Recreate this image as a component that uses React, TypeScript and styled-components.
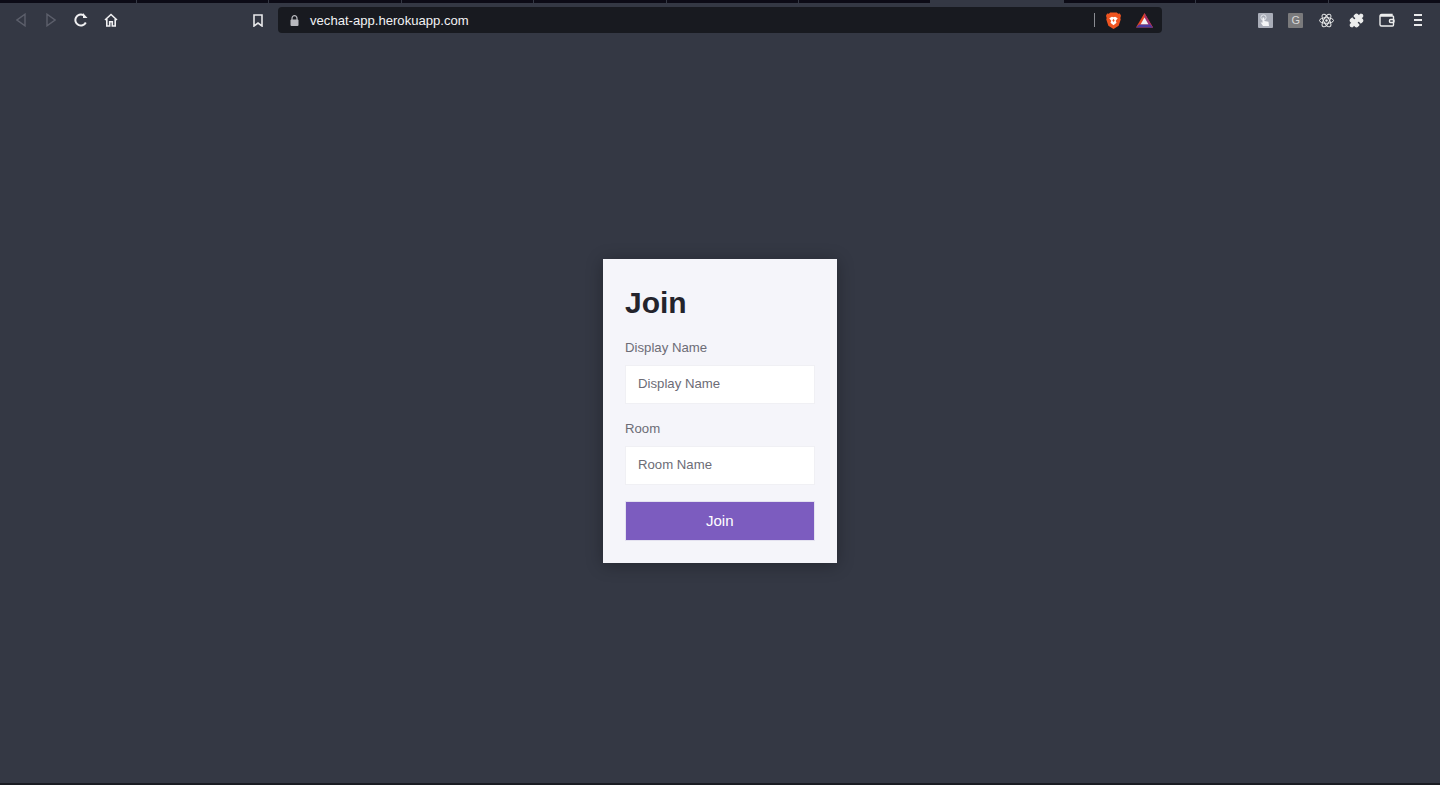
import styled, {createGlobalStyle} from 'styled-components'
import {Puzzle} from 'lucide-react'

const Global = createGlobalStyle`
  html, body, #root {
    margin: 0;
    height: 100%;
  }
  body {
    background: #343844;
    font-family: "Liberation Sans", Arial, sans-serif;
  }
`

const Page = styled.div`
  height: 785px;
  display: flex;
  flex-direction: column;
  overflow: hidden;
  background: #343844;
  border-bottom: 2px solid #1a1c22;
  box-sizing: border-box;
`

// ── Browser chrome ──

const TabStrip = styled.div`
  height: 3px;
  display: grid;
  grid-template-columns: 137px repeat(10, 132.4px);
  flex: none;
`

const Tab = styled.div<{$active?: boolean}>`
  background: ${(p) => (p.$active ? '#343844' : '#0c0b16')};
  border-right: 1px solid #343844;
`

const Toolbar = styled.div`
  height: 34px;
  margin-bottom: 2px;
  flex: none;
  display: flex;
  align-items: center;
  color: #fff;
`

const NavButton = styled.div`
  width: 30px;
  height: 24px;
  display: flex;
  align-items: center;
  justify-content: center;
  color: #f0f0f2;
  flex: none;
`

const NavGroup = styled.div`
  display: flex;
  margin-left: 6px;
`

const BookmarkSlot = styled.div`
  margin-left: 117px;
  width: 30px;
  display: flex;
  justify-content: center;
  color: #e8e8ea;
`

const AddressBar = styled.div`
  margin-left: 5px;
  width: 884px;
  height: 26px;
  box-sizing: border-box;
  background: #181a20;
  border-radius: 4px;
  display: flex;
  align-items: center;
  padding: 0 9px 0 12px;
  flex: none;
`

const Url = styled.span`
  margin-left: 11px;
  font-size: 13.1px;
  color: #f2f2f4;
  flex: 1;
`

const Divider = styled.div`
  width: 1px;
  height: 14px;
  background: #8a8c92;
  margin-right: 11px;
`

const AddressIcon = styled.svg`
  display: block;
  margin-right: 15px;
  &:last-child {
    margin-right: 0;
  }
`

const Extensions = styled.div`
  display: flex;
  align-items: center;
  margin-left: 88px;
`

const ExtSlot = styled.div`
  width: 30.5px;
  height: 24px;
  display: flex;
  align-items: center;
  justify-content: center;
  color: #eceded;
`

const ExtTile = styled.div<{$bg: string}>`
  width: 15px;
  height: 15px;
  background: ${(p) => p.$bg};
  color: #d8d8d8;
  font-size: 11px;
  display: flex;
  align-items: center;
  justify-content: center;
  border-radius: 1px;
`

const Burger = styled.div`
  display: flex;
  flex-direction: column;
  gap: 3.5px;
  width: 8px;
  span {
    display: block;
    height: 1.5px;
    background: #e8e8ea;
  }
`

// ── Join form ──

const Main = styled.main`
  flex: 1;
  display: flex;
  align-items: center;
  justify-content: center;
`

const Card = styled.form`
  width: 234px;
  height: 304px;
  box-sizing: border-box;
  padding: 22px 22.5px 22px 22px;
  background: #f5f5fa;
  box-shadow: 0 2px 16px rgba(0, 0, 0, 0.3);
  display: flex;
  flex-direction: column;
`

const Title = styled.h1`
  margin: 0 0 15px;
  font-size: 30px;
  line-height: 43px;
  font-weight: 700;
  color: #24242c;
`

const Label = styled.label`
  display: block;
  font-size: 13.2px;
  line-height: 17px;
  color: #6c6c76;
  margin-bottom: 8.75px;
  flex: none;
`

const Field = styled.input`
  display: block;
  width: 100%;
  height: 39.5px;
  flex: none;
  box-sizing: border-box;
  padding: 0 12px 2px;
  border: 1px solid #f0f0f4;
  background: #fff;
  font: inherit;
  font-size: 13.2px;
  color: #6c6c76;
  margin-bottom: 15.75px;
  border-radius: 0;
  outline: none;
  &::placeholder {
    color: #6c6c76;
    opacity: 1;
  }
`

const Submit = styled.button`
  width: 100%;
  height: 39.5px;
  flex: none;
  border: 1px solid #e4e2f0;
  background: #7c5cbf;
  color: #fff;
  font: inherit;
  font-size: 15px;
  padding: 0 0 1px;
  box-sizing: border-box;
`

const tabs = Array.from({length: 11}, (_, i) => i)

export default function App() {
  return (
    <Page>
      <Global />
      <TabStrip>
        {tabs.map((i) => (
          <Tab key={i} $active={i === 7} />
        ))}
      </TabStrip>
      <Toolbar>
        <NavGroup>
          <NavButton>
            <svg width="10" height="14" viewBox="0 0 10 14" fill="none" stroke="#5c5f6b" strokeWidth="1.4">
              <path d="M9 1.200v11.600L1 7z" />
            </svg>
          </NavButton>
          <NavButton>
            <svg width="10" height="14" viewBox="0 0 10 14" fill="none" stroke="#5c5f6b" strokeWidth="1.4">
              <path d="M1 1.200v11.600L9 7z" />
            </svg>
          </NavButton>
          <NavButton>
            <svg width="14" height="14" viewBox="0 0 14 14" fill="none" stroke="currentColor" strokeWidth="2">
              <path d="M11.800 9.500A5.500 5.500 0 1 1 9.500 2.200" />
              <path d="M9 0v5h4.500z" fill="currentColor" stroke="none" />
            </svg>
          </NavButton>
          <NavButton>
            <svg width="14" height="14" viewBox="0 0 14 14" fill="none" stroke="currentColor" strokeWidth="1.600">
              <path d="M1 7l6-5.500L13 7" />
              <path d="M2.800 6v7h2.900V8.800h2.600V13h2.900V6" />
            </svg>
          </NavButton>
        </NavGroup>
        <BookmarkSlot>
          <svg width="10" height="13" viewBox="0 0 10 13" fill="none" stroke="currentColor" strokeWidth="1.600">
            <path d="M1 1h8v11L5 9l-4 3z" />
          </svg>
        </BookmarkSlot>
        <AddressBar>
          <svg width="9" height="11" viewBox="0 0 9 11">
            <path d="M2 5V3.200a2.500 2.500 0 0 1 5 0V5" fill="none" stroke="#b8b9be" strokeWidth="1.200" />
            <rect x="0.500" y="4.500" width="8" height="6.500" rx="1" fill="#b8b9be" />
          </svg>
          <Url>vechat-app.herokuapp.com</Url>
          <Divider />
          <AddressIcon width="15" height="17" viewBox="0 0 16 18">
            <path d="M4.500.500h7l1.500 1.300 1.800-.3 1.200 2.500-.700 2.200.400 1.600-2.200 6.700L8 18l-5.500-3.500L.3 7.800l.4-1.600L0 4l1.200-2.500 1.800.3z" fill="#ee5420" />
            <path d="M3.500 6.500L6.300 5l1.700.600L9.700 5l2.800 1.500-2.100 2.800.8 2.200L8 14l-3.200-2.500.8-2.200z" fill="#fff" />
            <path d="M8 7l1.200 2L8 10.500 6.800 9z" fill="#ee5420" />
          </AddressIcon>
          <AddressIcon width="17" height="15" viewBox="0 0 17 15">
            <path d="M8.500 0L17 14.500H0z" fill="#e5451f" />
            <path d="M8.500 0L14 9.500l3 5h-3L8.500 5z" fill="#9e2f6e" />
            <path d="M8.500 4.500L12.500 11.500h-8z" fill="#f2f2f4" />
            <path d="M0 14.500l3-3h11l3 3z" fill="#4a3aa0" />
          </AddressIcon>
        </AddressBar>
        <Extensions>
          <ExtSlot>
            <ExtTile $bg="#a9adb8">
              <svg width="13" height="13" viewBox="0 0 13 13">
                <circle cx="4.500" cy="3.500" r="2.600" fill="none" stroke="#e4e6ec" strokeWidth="1" />
                <path d="M3.500 3.500h1.800v3.500l4.200.8.500 4.200H4L1.500 8.300l2 .5z" fill="#f4f5f7" />
              </svg>
            </ExtTile>
          </ExtSlot>
          <ExtSlot>
            <ExtTile $bg="#7a7a7c">G</ExtTile>
          </ExtSlot>
          <ExtSlot>
            <svg width="15" height="15" viewBox="0 0 15 15" fill="none" stroke="currentColor" strokeWidth="1">
              <ellipse cx="7.500" cy="7.500" rx="7" ry="2.800" />
              <ellipse cx="7.500" cy="7.500" rx="7" ry="2.800" transform="rotate(60 7.500 7.500)" />
              <ellipse cx="7.500" cy="7.500" rx="7" ry="2.800" transform="rotate(120 7.500 7.500)" />
              <circle cx="7.500" cy="7.500" r="1.200" fill="currentColor" stroke="none" />
            </svg>
          </ExtSlot>
          <ExtSlot>
            <Puzzle size={15} fill="#eceded" />
          </ExtSlot>
          <ExtSlot>
            <svg width="16" height="14" viewBox="0 0 16 14" fill="none" stroke="currentColor" strokeWidth="1.400">
              <path d="M13 3V1.500H2.500A1.500 1.500 0 0 0 1 3v8.500A1.500 1.500 0 0 0 2.500 13H13.500a1 1 0 0 0 1-1V4a1 1 0 0 0-1-1H1" />
              <rect x="10.500" y="6.500" width="4.500" height="3" rx="1" />
            </svg>
          </ExtSlot>
          <ExtSlot>
            <Burger>
              <span />
              <span />
              <span />
            </Burger>
          </ExtSlot>
        </Extensions>
      </Toolbar>
      <Main>
        <Card>
          <Title>Join</Title>
          <Label htmlFor="name">Display Name</Label>
          <Field id="name" placeholder="Display Name" />
          <Label htmlFor="room">Room</Label>
          <Field id="room" placeholder="Room Name" />
          <Submit type="button">Join</Submit>
        </Card>
      </Main>
    </Page>
  )
}
